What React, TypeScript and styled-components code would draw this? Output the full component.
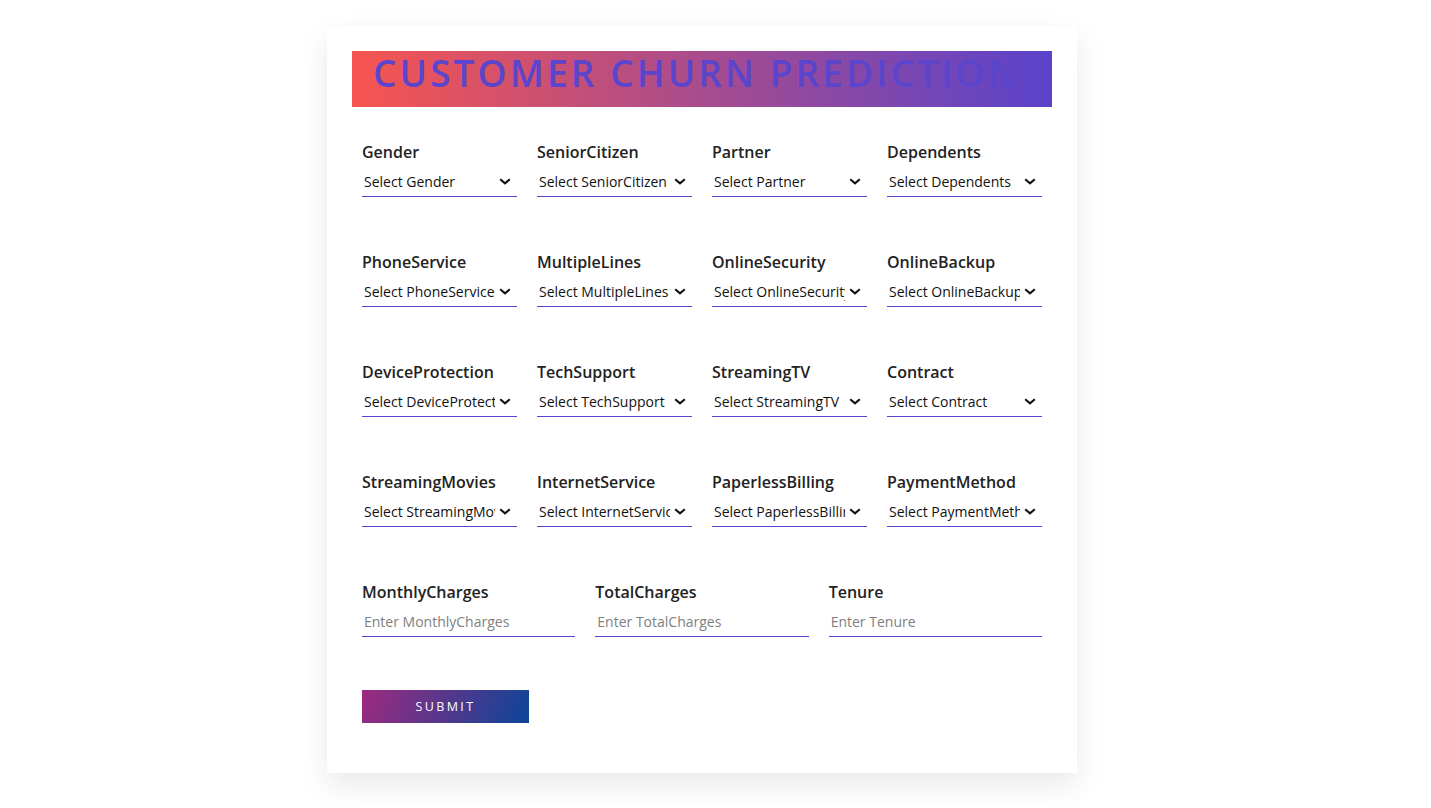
import { FC } from 'react'
import styled, { createGlobalStyle } from 'styled-components'

const selectFields = [
  'Gender',
  'SeniorCitizen',
  'Partner',
  'Dependents',
  'PhoneService',
  'MultipleLines',
  'OnlineSecurity',
  'OnlineBackup',
  'DeviceProtection',
  'TechSupport',
  'StreamingTV',
  'Contract',
  'StreamingMovies',
  'InternetService',
  'PaperlessBilling',
  'PaymentMethod',
]

const inputFields = ['MonthlyCharges', 'TotalCharges', 'Tenure']

const Chevron: FC = () => (
  <ChevronIcon width="12" height="7" viewBox="0 0 12 7" aria-hidden>
    <path d="M1.2 1.2 L6 5.4 L10.8 1.2" fill="none" stroke="#111" strokeWidth="2.1" />
  </ChevronIcon>
)

const App: FC = () => {
  return (
    <>
      <GlobalStyle />
      <Page>
        <Card>
          <Header>
            <Title>CUSTOMER CHURN PREDICTION</Title>
          </Header>
          <Form onSubmit={(e) => e.preventDefault()}>
            <SelectGrid>
              {selectFields.map((name) => (
                <Field key={name}>
                  <Label>{name}</Label>
                  <SelectWrap>
                    <Select defaultValue="">
                      <option value="" disabled>
                        Select {name}
                      </option>
                      <option value="yes">Yes</option>
                      <option value="no">No</option>
                    </Select>
                    <Chevron />
                  </SelectWrap>
                </Field>
              ))}
            </SelectGrid>
            <InputGrid>
              {inputFields.map((name) => (
                <Field key={name}>
                  <Label>{name}</Label>
                  <Input placeholder={`Enter ${name}`} />
                </Field>
              ))}
            </InputGrid>
            <SubmitButton type="submit">Submit</SubmitButton>
          </Form>
        </Card>
      </Page>
    </>
  )
}

export default App

const GlobalStyle = createGlobalStyle`
  body {
    margin: 0;
    background: #ffffff;
    font-family: 'Open Sans', 'Noto Sans', sans-serif;
  }
`

const Page = styled.div`
  display: flex;
  justify-content: center;
  padding-top: 26px;
  padding-right: 27px;
  min-height: 808px;
  box-sizing: border-box;
`

const Card = styled.div`
  width: 750px;
  height: 747px;
  box-sizing: border-box;
  padding: 25px;
  background: #ffffff;
  box-shadow: 0 12px 28px rgba(0, 0, 0, 0.09);
`

const Header = styled.div`
  height: 56px;
  display: flex;
  align-items: center;
  padding-left: 21px;
  padding-bottom: 12px;
  box-sizing: border-box;
  background: linear-gradient(90deg, #f65550 0%, #5a43cb 100%);
`

const Title = styled.h1`
  margin: 0;
  font-size: 37px;
  line-height: 40px;
  font-weight: 600;
  letter-spacing: 3.1px;
  white-space: nowrap;
  color: #5a45cc;
`

const Form = styled.form`
  padding: 34px 10px 0;
`

const SelectGrid = styled.div`
  display: grid;
  grid-template-columns: repeat(4, 155px);
  column-gap: 20px;
  row-gap: 54px;
`

const InputGrid = styled.div`
  margin-top: 54px;
  display: grid;
  grid-template-columns: repeat(3, 1fr);
  column-gap: 20px;
`

const Field = styled.div`
  display: flex;
  flex-direction: column;
`

const Label = styled.label`
  font-size: 16px;
  font-weight: 600;
  line-height: 22px;
  color: #222222;
`

const SelectWrap = styled.div`
  position: relative;
  margin-top: 5px;
`

const Select = styled.select`
  appearance: none;
  display: block;
  height: 29px;
  width: 100%;
  padding: 0 22px 2px 2px;
  border: none;
  border-radius: 0;
  border-bottom: 1px solid #5a43d0;
  background: #ffffff;
  font-family: 'Open Sans', 'Noto Sans', sans-serif;
  font-size: 14px;
  color: #111111;
  outline: none;
  text-overflow: clip;
`

const ChevronIcon = styled.svg`
  position: absolute;
  right: 6px;
  top: 10px;
  pointer-events: none;
`

const Input = styled.input`
  margin-top: 5px;
  height: 29px;
  width: 100%;
  box-sizing: border-box;
  padding: 0 2px 1px;
  border: none;
  border-radius: 0;
  border-bottom: 1px solid #5a43d0;
  font-family: 'Open Sans', 'Noto Sans', sans-serif;
  font-size: 14px;
  color: #111111;
  outline: none;

  &::placeholder {
    color: #808080;
  }
`

const SubmitButton = styled.button`
  margin-top: 53px;
  width: 167px;
  height: 33px;
  border: none;
  background: linear-gradient(110deg, #9d2a7f 0%, #0c4599 100%);
  color: #ffffff;
  font-family: 'Open Sans', 'Noto Sans', sans-serif;
  font-size: 12.5px;
  letter-spacing: 2.4px;
  text-transform: uppercase;
  cursor: pointer;
`
